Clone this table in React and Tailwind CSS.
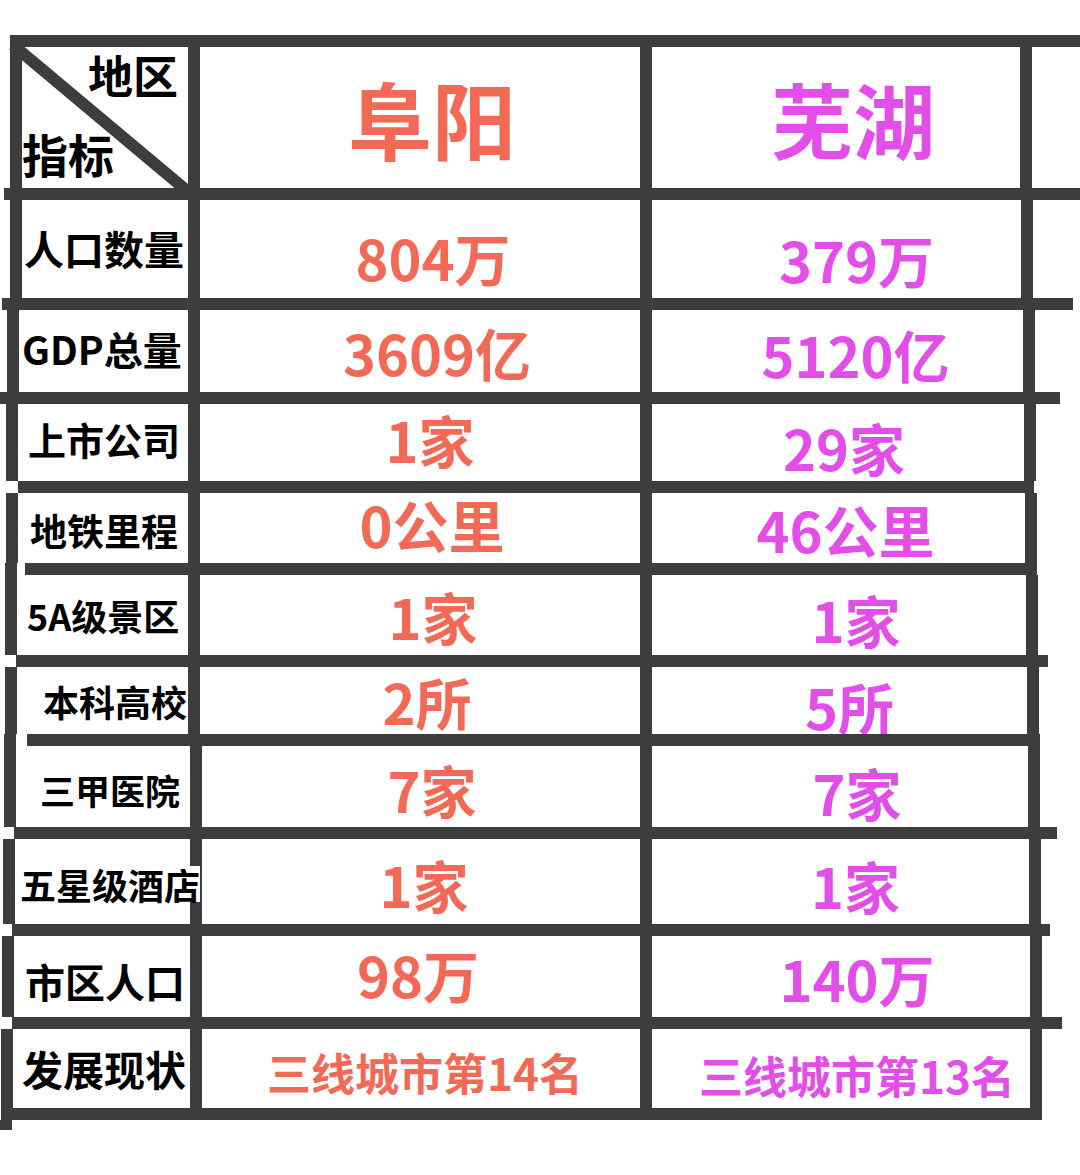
import React from 'react';

const line = 'bg-[#3d3d3d]';

// 每一行的几何与文字位置（手绘表格，线条略有倾斜）
const rows = [
  { h: 'h-[98px]', ml: 'ml-[10px]', lw: 'w-[166px]', v1w: 'w-[440px]', v2w: 'w-[369px]', label: '人口数量', lc: 'text-[40px] pl-[2px] pb-[2px]', fs: 'text-[56px]', v1: '804万', v1t: 'translate-x-[13px] translate-y-[8px]', v2: '379万', v2t: 'translate-x-[20px] translate-y-[10px]' },
  { h: 'h-[82px]', ml: 'ml-[7px]', lw: 'w-[169px]', v1w: 'w-[440px]', v2w: 'w-[371px]', label: 'GDP总量', lc: 'text-[39px] pl-[3px] pb-[6px]', fs: 'text-[56px]', v1: '3609亿', v1t: 'translate-x-[17px] translate-y-[1px]', v2: '5120亿', v2t: 'translate-x-[18px] translate-y-[3px]' },
  { h: 'h-[77px]', ml: 'ml-[6px]', lw: 'w-[170px]', v1w: 'w-[440px]', v2w: 'w-[372px]', label: '上市公司', lc: 'text-[38px] pl-[10px] pb-[8px]', fs: 'text-[56px]', v1: '1家', v1t: 'translate-x-[10px] -translate-y-[4px]', v2: '29家', v2t: 'translate-x-[6px] translate-y-[4px]' },
  { h: 'h-[70px]', ml: 'ml-[6px]', lw: 'w-[170px]', v1w: 'w-[440px]', v2w: 'w-[373px]', label: '地铁里程', lc: 'text-[37px] pl-[12px] pt-[4px]', fs: 'text-[56px]', v1: '0公里', v1t: 'translate-x-[12px] -translate-y-[4px]', v2: '46公里', v2t: 'translate-x-[7px] translate-y-[1px]' },
  { h: 'h-[80px]', ml: 'ml-[5px]', lw: 'w-[171px]', v1w: 'w-[440px]', v2w: 'w-[374px]', label: '5A级景区', lc: 'text-[36px] pl-[10px]', fs: 'text-[56px]', v1: '1家', v1t: 'translate-x-[13px] translate-y-[1px]', v2: '1家', v2t: 'translate-x-[17px] translate-y-[4px]' },
  { h: 'h-[67px]', ml: 'ml-[5px]', lw: 'w-[171px]', v1w: 'w-[440px]', v2w: 'w-[375px]', label: '本科高校', lc: 'text-[36px] pl-[26px]', fs: 'text-[56px]', v1: '2所', v1t: 'translate-x-[7px] translate-y-[0px]', v2: '5所', v2t: 'translate-x-[10px] translate-y-[5px]' },
  { h: 'h-[81px]', ml: 'ml-[4px]', lw: 'w-[174px]', v1w: 'w-[438px]', v2w: 'w-[376px]', label: '三甲医院', lc: 'text-[35px] pl-[24px] pt-[6px]', fs: 'text-[56px]', v1: '7家', v1t: 'translate-x-[11px] translate-y-[2px]', v2: '7家', v2t: 'translate-x-[17px] translate-y-[5px]' },
  { h: 'h-[85px]', ml: 'ml-[3px]', lw: 'w-[175px]', v1w: 'w-[438px]', v2w: 'w-[377px]', label: '五星级酒店', lc: 'text-[36px] pl-[5px] pt-[4px]', fs: 'text-[56px]', v1: '1家', v1t: 'translate-x-[3px] translate-y-[2px]', v2: '1家', v2t: 'translate-x-[15px] translate-y-[3px]' },
  { h: 'h-[81px]', ml: 'ml-[2px]', lw: 'w-[176px]', v1w: 'w-[438px]', v2w: 'w-[378px]', label: '市区人口', lc: 'text-[40px] pl-[11px] pt-[8px]', fs: 'text-[56px]', v1: '98万', v1t: '-translate-x-[3px] -translate-y-[3px]', v2: '140万', v2t: 'translate-x-[16px] translate-y-[1px]' },
  { h: 'h-[79px]', ml: 'ml-[1px]', lw: 'w-[177px]', v1w: 'w-[438px]', v2w: 'w-[378px]', label: '发展现状', lc: 'text-[41px] pl-[9px]', fs: 'text-[44px]', v1: '三线城市第14名', v1t: 'translate-x-[4px] translate-y-[3px]', v2: '三线城市第13名', v2t: 'translate-x-[16px] translate-y-[6px]' },
];

// 行与行之间的横线（起点、长度各不相同）
const hlines = [
  'ml-[4px] w-[1076px]',
  'ml-[2px] w-[1071px]',
  'ml-[0px] w-[1060px]',
  'ml-[18px] w-[1016px]',
  null,
  'ml-[16px] w-[1032px]',
  null,
  'ml-[14px] w-[1043px]',
  'ml-[12px] w-[1038px]',
  'ml-[12px] w-[1050px]',
  'ml-[1px] w-[1041px]',
];

function HLine({ i }) {
  if (i === 4) {
    return (
      <div className="relative z-20 flex h-[12px]">
        <div className={`ml-[5px] w-[12px] ${line}`} />
        <div className={`ml-[8px] w-[1012px] ${line}`} />
      </div>
    );
  }
  if (i === 6) {
    return (
      <div className="relative z-20 flex h-[12px]">
        <div className={`ml-[4px] w-[12px] ${line}`} />
        <div className={`ml-[11px] w-[1013px] ${line}`} />
      </div>
    );
  }
  return <div className={`relative z-20 h-[12px] ${line} ${hlines[i]}`} />;
}

function Row({ r }) {
  return (
    <div className={`flex ${r.h}`}>
      <div className={`${r.ml} w-[12px] shrink-0 ${line}`} />
      <div className={`${r.lw} shrink-0 flex items-center text-black font-bold leading-none whitespace-nowrap ${r.lc}`}>
        <span className="relative z-10 bg-white">{r.label}</span>
      </div>
      <div className={`w-[12px] shrink-0 ${line}`} />
      <div className={`${r.v1w} shrink-0 flex items-center justify-center font-bold leading-none text-[#f26a56] whitespace-nowrap ${r.fs}`}>
        <span className={r.v1t}>{r.v1}</span>
      </div>
      <div className={`w-[12px] shrink-0 ${line}`} />
      <div className={`${r.v2w} shrink-0 flex items-center justify-center font-bold leading-none text-[#e34ee9] whitespace-nowrap ${r.fs}`}>
        <span className={r.v2t}>{r.v2}</span>
      </div>
      <div className={`w-[12px] shrink-0 ${line}`} />
    </div>
  );
}

export default function App() {
  return (
    <div className="w-[1080px] h-[1175px] bg-white overflow-hidden pt-[35px] font-['Noto_Sans_CJK_SC','Noto_Sans',sans-serif]">
      <div className={`h-[12px] ml-[10px] w-[1070px] ${line}`} />

      {/* 表头 */}
      <div className="flex h-[141px]">
        <div className={`ml-[10px] w-[12px] shrink-0 ${line}`} />
        <div className="relative w-[166px] shrink-0 flex flex-col font-bold text-black leading-none">
          <svg className="absolute inset-0 w-full h-full overflow-visible" viewBox="0 0 166 141">
            <line x1="-9" y1="-2" x2="164" y2="143" stroke="#3d3d3d" strokeWidth="12" />
          </svg>
          <span className="relative self-end pr-[10px] pt-[5px] text-[45px]">地区</span>
          <span className="relative mt-auto pb-[12px] text-[46px]">指标</span>
        </div>
        <div className={`w-[12px] shrink-0 ${line}`} />
        <div className="w-[440px] shrink-0 flex items-center justify-center pl-[24px] pt-[1px] text-[84px] font-bold leading-none text-[#f26a56]">
          阜阳
        </div>
        <div className={`w-[12px] shrink-0 ${line}`} />
        <div className="w-[368px] shrink-0 flex items-center justify-center pl-[34px] pt-[1px] text-[82px] font-bold leading-none text-[#e34ee9]">
          芜湖
        </div>
        <div className={`w-[12px] shrink-0 ${line}`} />
      </div>

      {rows.map((r, i) => (
        <React.Fragment key={r.label}>
          <HLine i={i} />
          <Row r={r} />
        </React.Fragment>
      ))}
      <HLine i={10} />
      <div className={`h-[10px] w-[12px] ${line}`} />
    </div>
  );
}
